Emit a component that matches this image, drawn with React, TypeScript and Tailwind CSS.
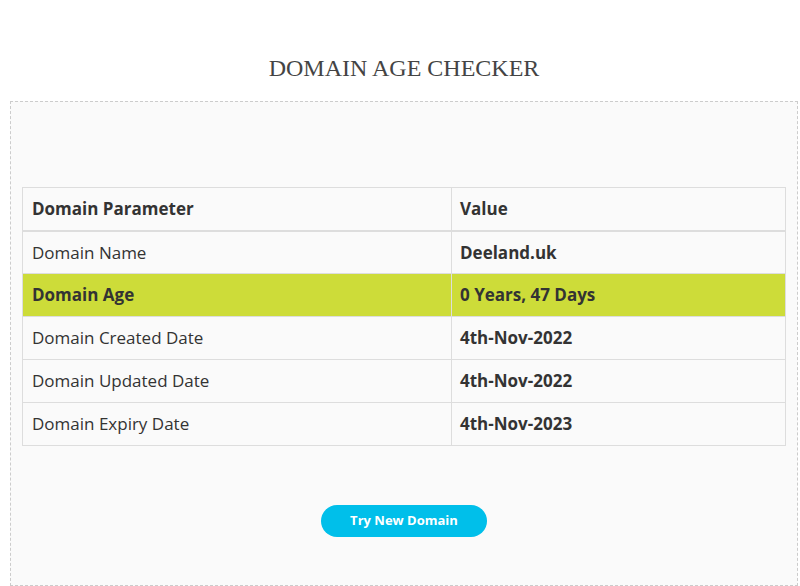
const rows = [
  { label: 'Domain Name', value: 'Deeland.uk' },
  { label: 'Domain Age', value: '0 Years, 47 Days', highlight: true },
  { label: 'Domain Created Date', value: '4th-Nov-2022' },
  { label: 'Domain Updated Date', value: '4th-Nov-2022' },
  { label: 'Domain Expiry Date', value: '4th-Nov-2023' },
];

export default function App() {
  return (
    <div className="min-h-[586px] bg-white pl-[10px] pr-[2px] pt-[53px] font-['Open_Sans',sans-serif] text-[#333]">
      <h1 className="text-center font-['Liberation_Serif',serif] text-[24px] leading-[30px] text-[#444] mb-[18px]">
        DOMAIN AGE CHECKER
      </h1>

      <div className="border border-dashed border-[#ccc] bg-[#fafafa] px-[11px] pt-[85px] pb-[48px]">
        <table className="w-full border-collapse border border-[#ddd] text-[17px]">
          <thead>
            <tr className="border-b-2 border-[#ddd]">
              <th className="w-[429px] border border-[#ddd] px-[9px] h-[43px] text-left font-bold">Domain Parameter</th>
              <th className="border border-[#ddd] px-[8px] h-[43px] text-left font-bold">Value</th>
            </tr>
          </thead>
          <tbody>
            {rows.map((r) => (
              <tr key={r.label} className={r.highlight ? 'bg-[#cddc39]' : ''}>
                <td className={`border border-[#ddd] px-[9px] h-[43px] ${r.highlight ? 'font-bold' : ''}`}>{r.label}</td>
                <td className="border border-[#ddd] px-[8px] h-[43px] font-bold">{r.value}</td>
              </tr>
            ))}
          </tbody>
        </table>

        <div className="mt-[59px] flex justify-center">
          <button className="h-[32px] w-[166px] rounded-full bg-[#00bfea] text-[13px] font-bold text-white">
            Try New Domain
          </button>
        </div>
      </div>
    </div>
  );
}
